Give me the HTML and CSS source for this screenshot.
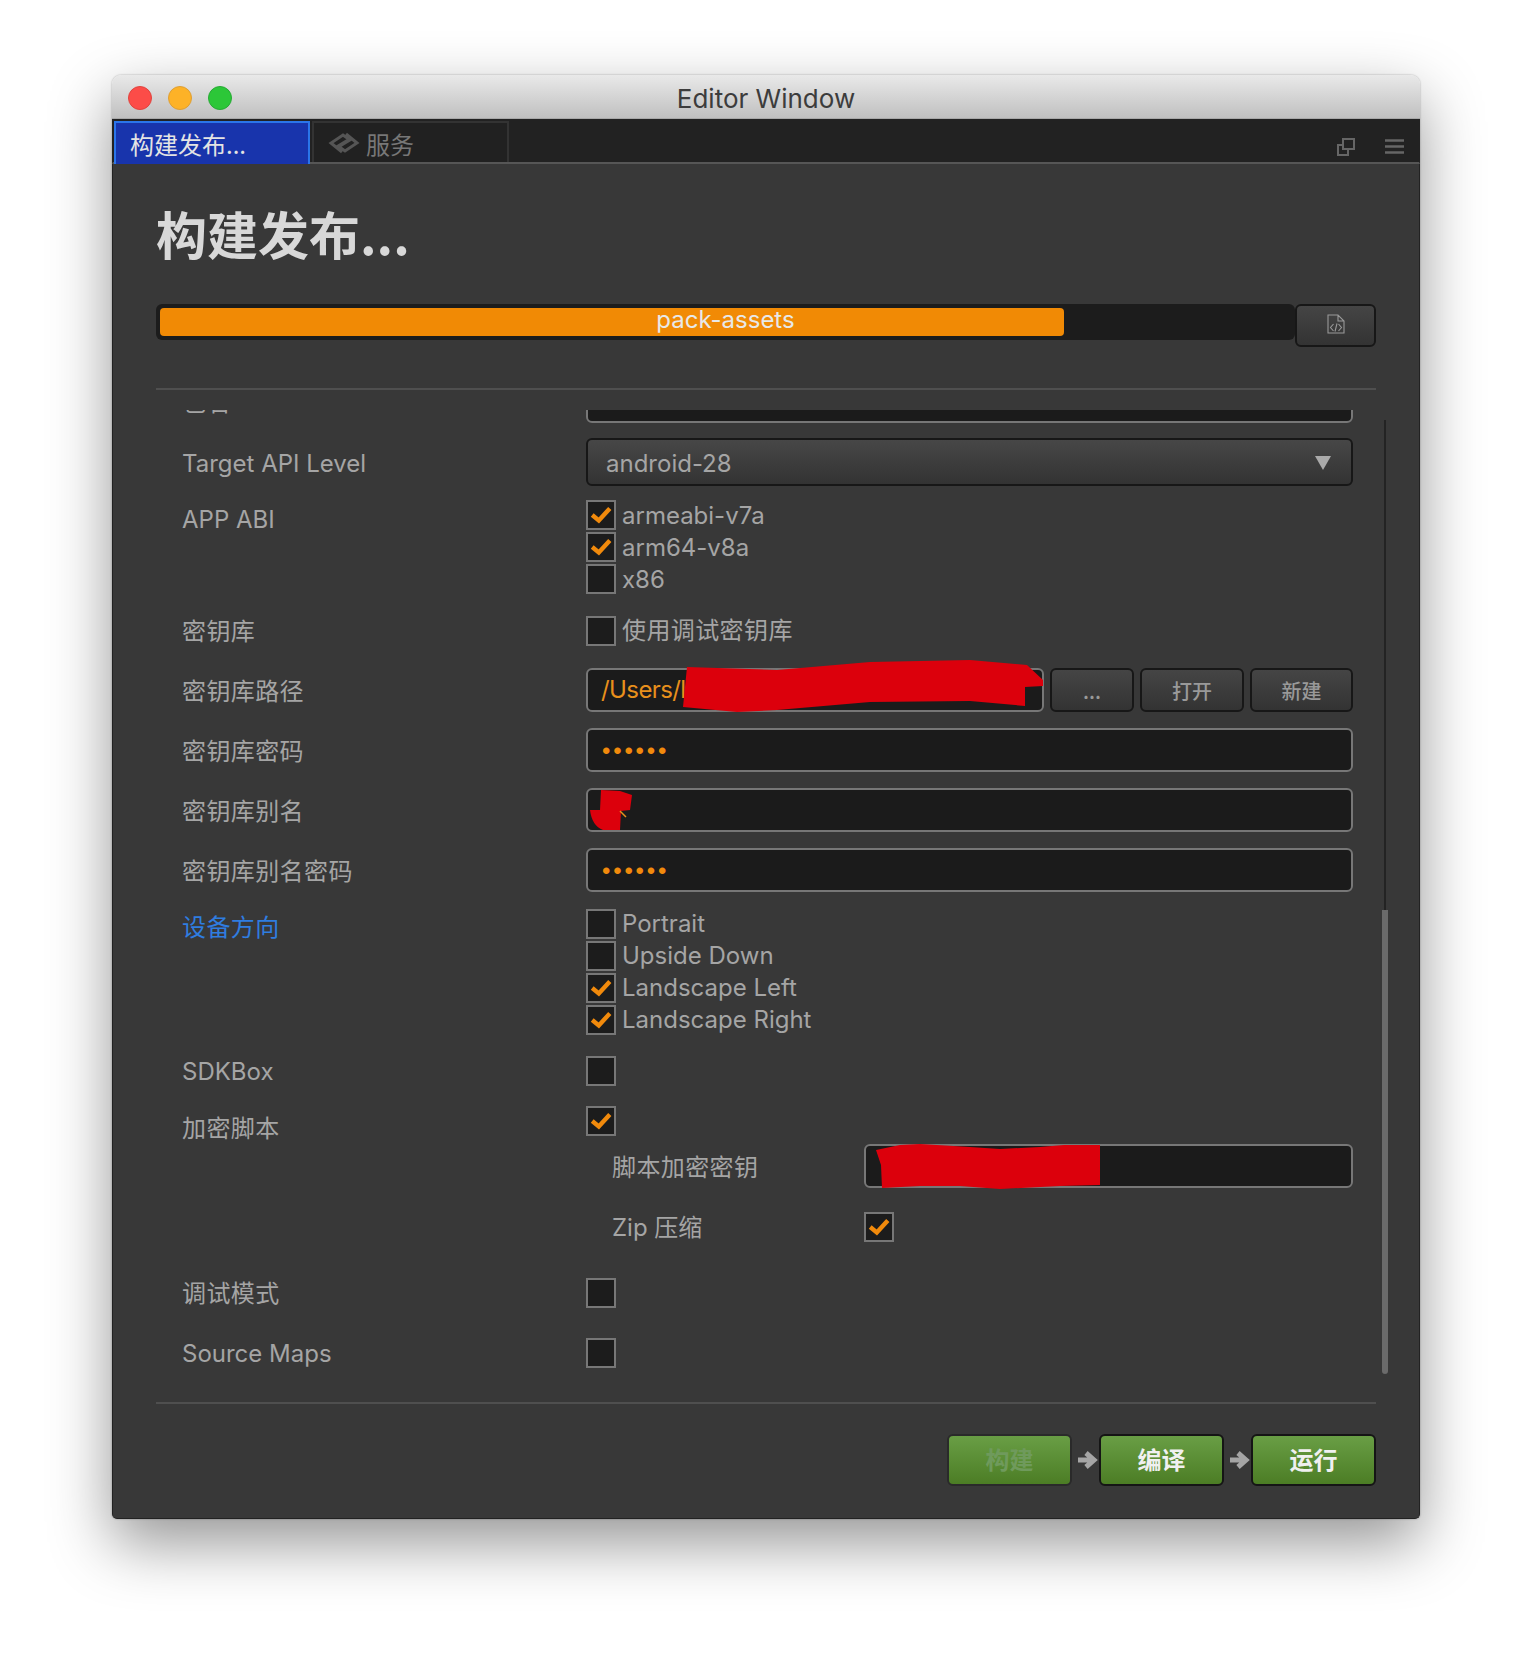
FILE: index.html
```html
<!DOCTYPE html>
<html lang="zh">
<head>
  <meta charset="UTF-8" />
  <title>Editor Window</title>
  <link rel="stylesheet" href="styles.css">
</head>
<body>

  <div class="ventana">
    <!-- Barra de titulo -->
    <div class="titulo">
      <span class="luz roja"></span>
      <span class="luz ambar"></span>
      <span class="luz verde"></span>
      <span class="titulo-texto">Editor Window</span>
    </div>

    <!-- Pestañas -->
    <div class="pestanas">
      <div class="pestana activa">构建发布...</div>
      <div class="pestana">
        <svg class="icono-servicio" width="32" height="22" viewBox="0 0 32 22"><path d="M14 20 3 11 15 3l7 5-10 6M18 2l11 9-12 8-7-5 10-6" fill="none" stroke="#555" stroke-width="3"/></svg>
        <span class="servicio-texto">服务</span>
      </div>
      <div class="pestana-iconos">
        <svg width="18" height="18" viewBox="0 0 18 18"><path d="M6 1h11v10H6zM6 7H1v10h10v-6" fill="none" stroke="#666" stroke-width="2"/></svg>
        <svg width="19" height="15" viewBox="0 0 19 15"><path d="M0 1.500h19M0 7.500h19M0 13.500h19" stroke="#666" stroke-width="2.400"/></svg>
      </div>
    </div>

    <!-- Contenido principal -->
    <div class="panel">
      <h1>构建发布...</h1>

      <div class="progreso-fila">
        <div class="progreso">
          <div class="progreso-barra"></div>
          <span class="progreso-texto">pack-assets</span>
        </div>
        <button class="btn btn-log">
          <svg width="18" height="20" viewBox="0 0 18 20"><path d="M1 1h10l6 6v12H1zM11 1v6h6M6.500 10l-3 3.500 3 3.500M11.500 10l3 3.500-3 3.500M10 9.500l-2 8" fill="none" stroke="#999" stroke-width="1.100"/></svg>
        </button>
      </div>

      <div class="separador"></div>

      <div class="lista">
        <div class="formulario">
          <div class="fila fila-input mb-15">
            <label class="cjk">包名</label>
            <div class="campo"><div class="input"></div></div>
          </div>
          <div class="fila fila-select mb-14">
            <label>Target API Level</label>
            <div class="campo">
              <div class="select">android-28<span class="flecha"></span></div>
            </div>
          </div>
          <div class="fila fila-multi fila-abi mb-22">
            <label>APP ABI</label>
            <div class="campo">
              <div class="check"><span class="caja marcada"><svg viewBox="0 0 20 16"><path d="M2 8l6 5 10-11" fill="none" stroke="#f18a0c" stroke-width="4"/></svg></span>armeabi-v7a</div>
              <div class="check"><span class="caja marcada"><svg viewBox="0 0 20 16"><path d="M2 8l6 5 10-11" fill="none" stroke="#f18a0c" stroke-width="4"/></svg></span>arm64-v8a</div>
              <div class="check"><span class="caja"></span>x86</div>
            </div>
          </div>
          <div class="fila mb-22">
            <label class="cjk">密钥库</label>
            <div class="campo">
              <div class="check cjk"><span class="caja"></span>使用调试密钥库</div>
            </div>
          </div>
          <div class="fila fila-input mb-16">
            <label class="cjk">密钥库路径</label>
            <div class="campo campo-botones">
              <div class="input naranja">/Users/l</div>
              <button class="btn btn-puntos">...</button>
              <button class="btn btn-abrir">打开</button>
              <button class="btn btn-nuevo">新建</button>
            </div>
          </div>
          <div class="fila fila-input mb-16">
            <label class="cjk">密钥库密码</label>
            <div class="campo"><div class="input puntos">••••••</div></div>
          </div>
          <div class="fila fila-input mb-16">
            <label class="cjk">密钥库别名</label>
            <div class="campo"><div class="input"></div></div>
          </div>
          <div class="fila fila-input mb-17">
            <label class="cjk">密钥库别名密码</label>
            <div class="campo"><div class="input puntos">••••••</div></div>
          </div>
          <div class="fila fila-multi fila-azul mb-21">
            <label class="azul cjk">设备方向</label>
            <div class="campo">
              <div class="check"><span class="caja"></span>Portrait</div>
              <div class="check"><span class="caja"></span>Upside Down</div>
              <div class="check"><span class="caja marcada"><svg viewBox="0 0 20 16"><path d="M2 8l6 5 10-11" fill="none" stroke="#f18a0c" stroke-width="4"/></svg></span>Landscape Left</div>
              <div class="check"><span class="caja marcada"><svg viewBox="0 0 20 16"><path d="M2 8l6 5 10-11" fill="none" stroke="#f18a0c" stroke-width="4"/></svg></span>Landscape Right</div>
            </div>
          </div>
          <div class="fila mb-20">
            <label>SDKBox</label>
            <div class="campo"><div class="check"><span class="caja"></span></div></div>
          </div>
          <div class="fila fila-cifrado mb-8">
            <label class="cjk">加密脚本</label>
            <div class="campo"><div class="check"><span class="caja marcada"><svg viewBox="0 0 20 16"><path d="M2 8l6 5 10-11" fill="none" stroke="#f18a0c" stroke-width="4"/></svg></span></div></div>
          </div>
          <div class="fila fila-input fila-sub mb-24">
            <label class="cjk">脚本加密密钥</label>
            <div class="campo"><div class="input"></div></div>
          </div>
          <div class="fila fila-sub mb-36">
            <label>Zip 压缩</label>
            <div class="campo"><div class="check"><span class="caja marcada"><svg viewBox="0 0 20 16"><path d="M2 8l6 5 10-11" fill="none" stroke="#f18a0c" stroke-width="4"/></svg></span></div></div>
          </div>
          <div class="fila mb-30">
            <label class="cjk">调试模式</label>
            <div class="campo"><div class="check"><span class="caja"></span></div></div>
          </div>
          <div class="fila">
            <label>Source Maps</label>
            <div class="campo"><div class="check"><span class="caja"></span></div></div>
          </div>
        </div>
        <div class="scroll"><div class="scroll-thumb"></div></div>
      </div>

      <div class="separador separador-abajo"></div>

      <div class="acciones">
        <button class="btn-verde desactivado">构建</button>
        <svg class="flecha-paso" width="20" height="20" viewBox="0 0 20 20"><path d="M0 10h15M8 3l8 7-8 7" fill="none" stroke="#a5a5a5" stroke-width="5"/></svg>
        <button class="btn-verde">编译</button>
        <svg class="flecha-paso" width="20" height="20" viewBox="0 0 20 20"><path d="M0 10h15M8 3l8 7-8 7" fill="none" stroke="#a5a5a5" stroke-width="5"/></svg>
        <button class="btn-verde">运行</button>
      </div>
    </div>

    <!-- Tachaduras rojas encima de los campos -->
    <svg class="tachado" width="1532" height="1668" viewBox="0 0 1532 1668">
      <path fill="#dc000c" d="M687 667 777 670 870 662 970 660 1027 665 1043 680 1043 686 1025 687 1025 706 970 701 870 702 777 710 737 712 683 707Z"/>
      <path fill="#dc000c" d="M601 790 620 791 632 795 630 810 621 811 620 830 603 830Q592 826 590 810L600 810Z"/>
      <path stroke="#e8901c" stroke-width="1.500" d="M620 811 626 817"/>
      <path fill="#dc000c" d="M876 1150 900 1145 920 1144 970 1147 1000 1149 1040 1147 1064 1145 1100 1145 1100 1185 1060 1186 1000 1189 960 1186 920 1186 882 1188 881 1165Z"/>
    </svg>
  </div>

</body>
</html>
```

FILE: styles.css
```css
* {
  margin: 0;
  padding: 0;
  box-sizing: border-box;
}

html, body {
  height: 100%;
  background-color: #fff;
  font-family: Inter, "Noto Sans CJK SC", sans-serif;
}

body {
  padding: 75px 112px 0;
}

/* Ventana */
.ventana {
  position: relative;
  width: 1308px;
  height: 1444px;
  border-radius: 9px 9px 5px 5px;
  display: flex;
  flex-direction: column;
  box-shadow: 0 0 2px rgba(0,0,0,0.35), 0 24px 62px rgba(0,0,0,0.42);
}

.titulo {
  position: relative;
  display: flex;
  align-items: center;
  gap: 16px;
  height: 44px;
  padding: 2px 0 0 16px;
  border-radius: 9px 9px 0 0;
  background: linear-gradient(#e9e9e9, #c0c0c0);
  border-bottom: 1px solid #a8a8a8;
}

.luz {
  width: 24px;
  height: 24px;
  border-radius: 50%;
}

.roja { background-color: #fc4c48; border: 1px solid #e0443e; }
.ambar { background-color: #fdb227; border: 1px solid #de9f34; }
.verde { background-color: #2cc738; border: 1px solid #27aa35; }

.titulo-texto {
  position: absolute;
  left: 0;
  right: 0;
  top: 8px;
  text-align: center;
  font-size: 26px;
  color: #3c3c3c;
}

/* Pestañas */
.pestanas {
  display: flex;
  height: 45px;
  padding: 2px 0 0 1px;
  background-color: #222;
  border-bottom: 2px solid #565656;
  border-left: 1px solid #222;
  border-right: 1px solid #222;
  font-family: "Noto Sans CJK SC", sans-serif;
  font-size: 24px;
}

.pestana {
  display: flex;
  align-items: center;
  gap: 6px;
  width: 197px;
  padding-left: 14px;
  color: #777;
  border: 2px solid #333;
  border-bottom: none;
  background-color: #212121;
}

.servicio-texto {
  padding-top: 2px;
}

.pestana.activa {
  width: 196px;
  padding-left: 14px;
  margin-right: 2px;
  color: #e4e4e4;
  background-color: #1834ac;
  border: 2px solid #2a75ea;
  border-bottom: none;
  margin-bottom: -2px;
}

.pestana-iconos {
  margin-left: auto;
  display: flex;
  align-items: center;
  gap: 30px;
  padding: 10px 15px 0 0;
}

/* Panel */
.panel {
  flex: 1;
  padding: 0 43px;
  background-color: #383838;
  border: 1px solid #222;
  border-top: none;
  border-radius: 0 0 5px 5px;
}

h1 {
  padding-top: 33px;
  font-family: "Noto Sans CJK SC", sans-serif;
  font-size: 51px;
  line-height: 72px;
  font-weight: 700;
  color: #d8d8d8;
}

.progreso-fila {
  display: flex;
  margin-top: 35px;
  height: 43px;
}

.progreso {
  position: relative;
  flex: 1;
  height: 36px;
  padding: 4px;
  border-radius: 6px;
  background-color: #1c1c1c;
}

.progreso-barra {
  width: 904px;
  height: 28px;
  border-radius: 4px;
  background-color: #f18a05;
}

.progreso-texto {
  position: absolute;
  left: 0;
  right: 0;
  top: 0;
  text-align: center;
  font-size: 24px;
  line-height: 32px;
  color: #e8e8e8;
}

.btn {
  border: 2px solid #171717;
  border-radius: 6px;
  background: linear-gradient(#454545, #333);
  color: #999;
  font-family: "Noto Sans CJK SC", sans-serif;
  font-size: 20px;
  font-weight: 500;
}

.btn-log {
  width: 81px;
  height: 43px;
}

.separador {
  height: 2px;
  margin-top: 41px;
  background-color: #4f4f4f;
}

/* Lista con scroll */
.lista {
  position: relative;
  height: 992px;
  margin: 20px -20px 0 0;
  overflow: hidden;
}

.formulario {
  margin-top: -31px;
  padding-left: 26px;
  width: 1197px;
  color: #a5a5a5;
  font-size: 24px;
}

.cjk {
  letter-spacing: 0.400px;
}

.fila {
  display: flex;
  align-items: flex-start;
}

.fila label {
  width: 404px;
  height: 30px;
  padding-top: 1px;
  flex-shrink: 0;
  line-height: 30px;
}

.fila-input label {
  height: 44px;
  padding-top: 2px;
  line-height: 44px;
}

.fila-select label {
  height: 48px;
  padding-top: 2px;
  line-height: 48px;
}

.fila-multi label {
  padding-top: 5px;
}

.fila-azul label {
  padding-top: 4px;
}

.fila-cifrado label {
  padding-top: 8px;
}

.fila-abi .check {
  line-height: 33px;
}

.mb-8 { margin-bottom: 8px; }
.mb-14 { margin-bottom: 14px; }
.mb-15 { margin-bottom: 15px; }
.mb-16 { margin-bottom: 16px; }
.mb-17 { margin-bottom: 17px; }
.mb-20 { margin-bottom: 20px; }
.mb-21 { margin-bottom: 21px; }
.mb-22 { margin-bottom: 22px; }
.mb-24 { margin-bottom: 24px; }
.mb-30 { margin-bottom: 30px; }
.mb-36 { margin-bottom: 36px; }

.campo {
  flex: 1;
}

.azul {
  color: #2f7de0;
}

.input, .select {
  border-radius: 6px;
}

.input {
  height: 44px;
  line-height: 40px;
  padding-left: 14px;
  border: 2px solid #777;
  background-color: #1b1b1b;
}

.select {
  position: relative;
  height: 48px;
  line-height: 48px;
  padding-left: 18px;
  border: 2px solid #171717;
  background: linear-gradient(#474747, #333);
}

.flecha {
  position: absolute;
  right: 20px;
  top: 16px;
  border-left: 8px solid transparent;
  border-right: 8px solid transparent;
  border-top: 14px solid #aaa;
}

.naranja {
  flex: 1;
  padding-left: 13px;
  color: #e8901c;
  letter-spacing: -0.600px;
}

.puntos {
  color: #f18a0c;
  font-family: "Liberation Sans", sans-serif;
  line-height: 42px;
  letter-spacing: 2.800px;
}

.campo-botones {
  display: flex;
  gap: 6px;
}

.btn-puntos { width: 84px; }
.btn-abrir { width: 104px; }
.btn-nuevo { width: 103px; }

.check {
  display: flex;
  align-items: center;
  gap: 6px;
  height: 30px;
  margin-bottom: 2px;
  line-height: 30px;
}

.check:last-child {
  margin-bottom: 0;
}

.caja {
  display: flex;
  align-items: center;
  justify-content: center;
  width: 30px;
  height: 30px;
  border: 2px solid #777;
  background-color: #1c1c1c;
}

.caja svg {
  width: 22px;
  height: 18px;
}

.fila-sub {
  padding-left: 430px;
}

.fila-sub label {
  width: 252px;
}

/* Scroll */
.scroll {
  position: absolute;
  top: 10px;
  right: 10px;
  bottom: 28px;
  width: 2px;
  background-color: #232323;
}

.scroll-thumb {
  position: absolute;
  left: -2px;
  right: -2px;
  bottom: 0;
  height: 464px;
  border-radius: 0 0 3px 3px;
  background-color: #6b6b6b;
}

/* Botones de abajo */
.separador-abajo {
  margin-top: 0;
}

.acciones {
  display: flex;
  align-items: center;
  justify-content: flex-end;
  margin-top: 30px;
}

.btn-verde {
  width: 125px;
  height: 52px;
  padding-bottom: 4px;
  border: 2px solid #151515;
  border-radius: 6px;
  background: linear-gradient(#699e45, #4c7d25);
  color: #f0f0f0;
  font-family: "Noto Sans CJK SC", sans-serif;
  font-size: 24px;
  font-weight: 700;
}

.desactivado {
  color: #6f9a5c;
  border-color: #2a2a2a;
}

.flecha-paso {
  margin: 0 1px 0 6px;
}

.tachado {
  position: absolute;
  left: -112px;
  top: -75px;
  pointer-events: none;
}
```
